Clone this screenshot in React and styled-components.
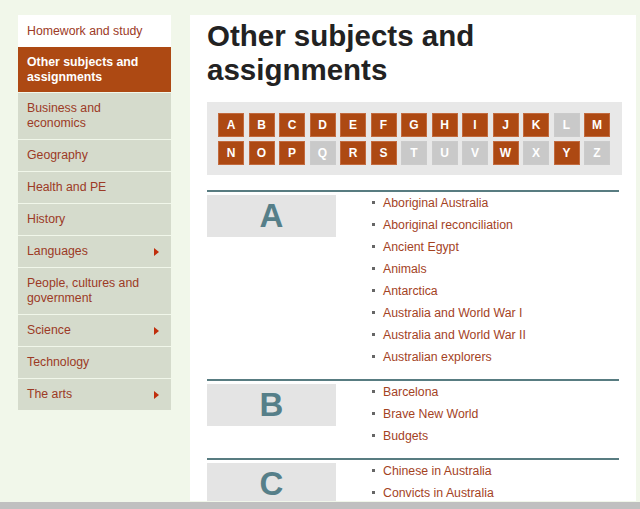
import React from "react";
import styled, { createGlobalStyle } from "styled-components";

const GlobalStyle = createGlobalStyle`
  html, body {
    margin: 0;
    padding: 0;
    background: #f1f7ea;
    font-family: "Liberation Sans", Arial, sans-serif;
  }
  * { box-sizing: border-box; }
`;

const Page = styled.div`
  height: 100vh;
  display: flex;
  flex-direction: column;
  overflow: hidden;
`;

const Layout = styled.div`
  flex: 1;
  min-height: 0;
  display: flex;
  align-items: stretch;
  gap: 19px;
  padding: 15px 4px 1px 18px;
  overflow: hidden;
`;

const BottomBar = styled.div`
  height: 7px;
  flex: none;
  background: #c0c0c0;
`;

/* ---------- side navigation ---------- */

const Sidebar = styled.nav`
  width: 153px;
  flex: none;
  align-self: flex-start;
  display: flex;
  flex-direction: column;
`;

const NavItem = styled.a`
  display: flex;
  align-items: center;
  justify-content: space-between;
  gap: 8px;
  padding: ${(p) =>
    p.$variant === "top" ? "9px 12px 8px 9px" : p.$variant === "active" ? "8px 12px 7px 9px" : "8px 12px 8px 9px"};
  font-size: 12.3px;
  line-height: 15px;
  text-decoration: none;
  cursor: pointer;
  margin-bottom: ${(p) => (p.$variant === "top" ? "0" : "1px")};
  background: ${(p) =>
    p.$variant === "top" ? "#ffffff" : p.$variant === "active" ? "#ad4913" : "#d5dbcc"};
  color: ${(p) => (p.$variant === "active" ? "#ffffff" : "#9c3a26")};
  font-weight: ${(p) => (p.$variant === "active" ? 700 : 400)};
`;

const Arrow = styled.span`
  flex: none;
  width: 0;
  height: 0;
  border-top: 4px solid transparent;
  border-bottom: 4px solid transparent;
  border-left: 5px solid #c02e0c;
`;

/* ---------- main column ---------- */

const Main = styled.main`
  flex: 1;
  min-width: 0;
  background: #ffffff;
  padding: 4px 14px 0 17px;
  overflow: hidden;
`;

const Title = styled.h1`
  margin: 0 0 15px;
  font-size: 29.5px;
  line-height: 34px;
  font-weight: 700;
  color: #222222;
  max-width: 300px;
`;

const LetterPanel = styled.div`
  background: #e8e8e8;
  padding: 11px 12px 10px 11px;
  display: grid;
  grid-template-columns: repeat(13, 26px);
  column-gap: 4.5px;
  row-gap: 4px;
`;

const LetterButton = styled.a`
  height: 24px;
  display: flex;
  align-items: center;
  justify-content: center;
  font-size: 12px;
  font-weight: 700;
  color: #ffffff;
  text-decoration: none;
  background: ${(p) => (p.$off ? "#c9c9c9" : "#ad4913")};
  border: 1px solid ${(p) => (p.$off ? "#cbcbcb" : "#c26a3e")};
  cursor: ${(p) => (p.$off ? "default" : "pointer")};
`;

const Section = styled.section`
  margin: ${(p) => (p.$first ? "15px" : "0")} 3px 0 0;
  border-top: 2px solid #587c81;
  padding-bottom: 11px;
  display: grid;
  grid-template-columns: 129px 1fr;
  column-gap: 36px;
  align-items: start;
`;

const SectionLetter = styled.div`
  margin-top: 3px;
  height: 42px;
  background: #e4e4e4;
  color: #567f89;
  font-size: 33px;
  font-weight: 700;
  line-height: 42px;
  text-align: center;
`;

const TopicList = styled.ul`
  list-style: none;
  margin: 0;
  padding: 0;
`;

const Topic = styled.li`
  position: relative;
  padding-left: 11px;
  font-size: 12.3px;
  line-height: 22px;

  &::before {
    content: "";
    position: absolute;
    left: 0;
    top: 9px;
    width: 3px;
    height: 3px;
    background: #666666;
  }
`;

const TopicLink = styled.a`
  color: #a4431f;
  text-decoration: none;
  cursor: pointer;
`;

const navItems = [
  { label: "Homework and study", variant: "top" },
  { label: "Other subjects and assignments", variant: "active" },
  { label: "Business and economics" },
  { label: "Geography" },
  { label: "Health and PE" },
  { label: "History" },
  { label: "Languages", sub: true },
  { label: "People, cultures and government" },
  { label: "Science", sub: true },
  { label: "Technology" },
  { label: "The arts", sub: true },
];

const inactive = new Set(["L", "Q", "T", "U", "V", "X", "Z"]);
const letters = "ABCDEFGHIJKLMNOPQRSTUVWXYZ".split("");

const sections = [
  {
    letter: "A",
    topics: [
      "Aboriginal Australia",
      "Aboriginal reconciliation",
      "Ancient Egypt",
      "Animals",
      "Antarctica",
      "Australia and World War I",
      "Australia and World War II",
      "Australian explorers",
    ],
  },
  { letter: "B", topics: ["Barcelona", "Brave New World", "Budgets"] },
  { letter: "C", topics: ["Chinese in Australia", "Convicts in Australia"] },
];

export default function App() {
  return (
    <Page>
      <GlobalStyle />
      <Layout>
        <Sidebar>
          {navItems.map((item) => (
            <NavItem key={item.label} $variant={item.variant}>
              <span>{item.label}</span>
              {item.sub && <Arrow />}
            </NavItem>
          ))}
        </Sidebar>
        <Main>
          <Title>Other subjects and assignments</Title>
          <LetterPanel>
            {letters.map((l) => (
              <LetterButton key={l} $off={inactive.has(l)}>
                {l}
              </LetterButton>
            ))}
          </LetterPanel>
          {sections.map((s, i) => (
            <Section key={s.letter} $first={i === 0}>
              <SectionLetter>{s.letter}</SectionLetter>
              <TopicList>
                {s.topics.map((t) => (
                  <Topic key={t}>
                    <TopicLink>{t}</TopicLink>
                  </Topic>
                ))}
              </TopicList>
            </Section>
          ))}
        </Main>
      </Layout>
      <BottomBar />
    </Page>
  );
}
